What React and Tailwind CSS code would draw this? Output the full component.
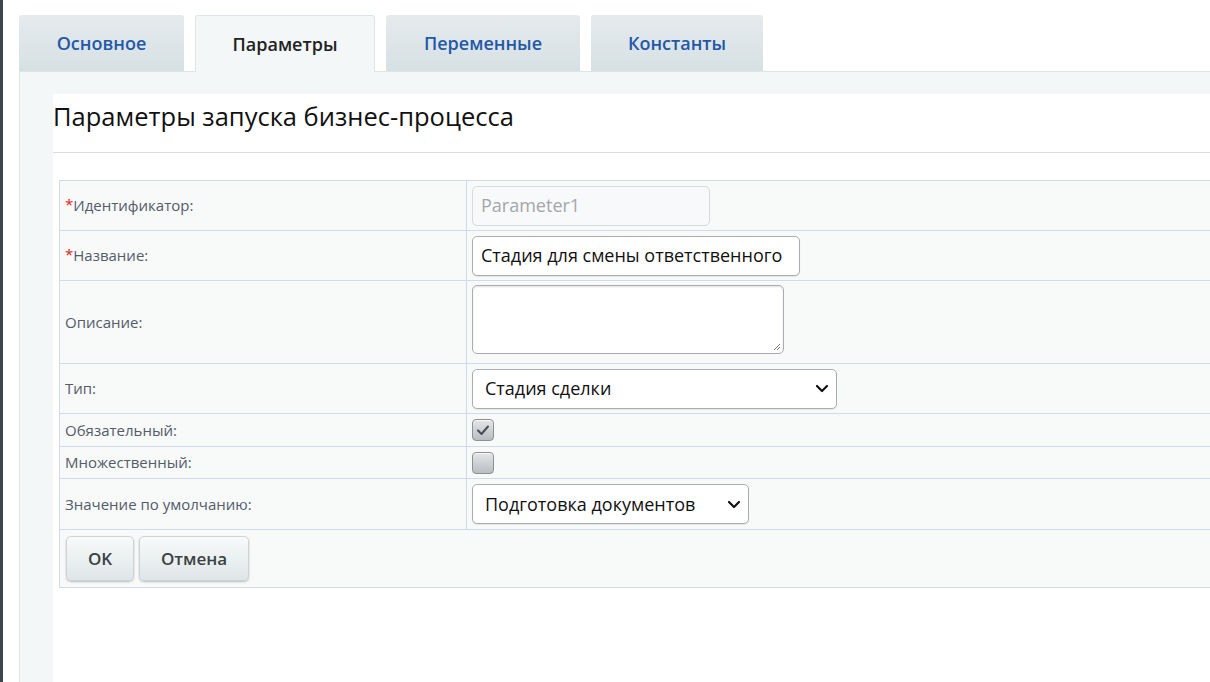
import React from "react";

const TABS = [
  { label: "Основное", w: "w-[165px]" },
  { label: "Параметры", w: "w-[180px]", active: true },
  { label: "Переменные", w: "w-[194px]" },
  { label: "Константы", w: "w-[172px]" },
];

function Chevron() {
  return (
    <svg width="14" height="9" viewBox="0 0 14 9" className="shrink-0">
      <path d="M2 2l5 5 5-5" fill="none" stroke="#111" strokeWidth="2.2" strokeLinecap="round" strokeLinejoin="round" />
    </svg>
  );
}

function Checkbox({ checked }) {
  return (
    <div className="w-[22px] h-[22px] rounded-[4px] border border-[#8d9196] bg-gradient-to-b from-[#e4e6e8] to-[#b9bdc1] flex items-center justify-center shadow-[inset_0_1px_0_rgba(255,255,255,0.7)]">
      {checked && (
        <svg width="14" height="12" viewBox="0 0 14 12">
          <path d="M2 6.5l3.5 3.5L12 2.5" fill="none" stroke="#4a4e52" strokeWidth="2" strokeLinecap="round" strokeLinejoin="round" />
        </svg>
      )}
    </div>
  );
}

function Row({ label, required, h, top, children }) {
  return (
    <div className={`flex border-t border-[#d3d9ea] ${h}`}>
      <div className="w-[407px] shrink-0 border-r border-[#d3d9ea] flex items-center pl-[5px] text-[15px] text-[#535c69]">
        {required && <span className="text-[#e02020] self-start mt-[16px] leading-none text-[15px]">*</span>}
        {label}
      </div>
      <div className={top ? "flex items-start pt-[4px] pl-[5px]" : "flex items-center pl-[5px]"}>{children}</div>
    </div>
  );
}

const fieldBase =
  "h-[40px] rounded-[5px] border border-[#a9adb2] bg-white flex items-center text-[18px] text-[#111] shadow-[0_1px_1px_rgba(0,0,0,0.08)]";

export default function App() {
  return (
    <div className="w-[1210px] h-[682px] overflow-hidden bg-white flex font-['Open_Sans',sans-serif]">
      <div className="w-[3px] shrink-0 bg-[#3b4650]" />
      <div className="flex-1 pl-[16px] pt-[15px] flex flex-col">
        <div className="flex gap-[11px] h-[57px] relative z-10">
          {TABS.map((t) =>
            t.active ? (
              <div
                key={t.label}
                className={`${t.w} h-[57px] rounded-t-[3px] border border-b-0 border-[#dce5e8] bg-[#f3f7f8] flex items-center justify-center text-[18px] font-semibold text-[#222]`}
              >
                {t.label}
              </div>
            ) : (
              <div
                key={t.label}
                className={`${t.w} h-[56px] rounded-t-[3px] bg-gradient-to-b from-[#e5ebed] to-[#d6e0e3] flex items-center justify-center text-[18px] font-semibold text-[#2358a8]`}
              >
                {t.label}
              </div>
            )
          )}
        </div>
        <div className="flex-1 -mt-px border-t border-l border-[#dce5e8] bg-[#f3f7f8] pl-[33px] pt-[22px] flex">
          <div className="flex-1 bg-white flex flex-col">
            <div className="h-[59px] border-b border-[#dcdcdc] flex items-start pt-[3px] text-[25.5px] text-[#111]">
              Параметры запуска бизнес-процесса
            </div>
            <div className="ml-[6px] mt-[27px] border border-r-0 border-[#d3d9ea] bg-[#f8f9f9] text-[#222]">
              <div className="flex h-[49px]">
                <div className="w-[407px] shrink-0 border-r border-[#d3d9ea] flex items-center pl-[5px] text-[15px] text-[#535c69]">
                  <span className="text-[#e02020] self-start mt-[16px] leading-none text-[15px]">*</span>
                  Идентификатор:
                </div>
                <div className="flex items-center pl-[5px]">
                  <div className="w-[238px] h-[40px] rounded-[5px] border border-[#d6d9dd] bg-[#f8f9fa] flex items-center px-[8px] text-[18px] text-[#a3a7ab]">
                    Parameter1
                  </div>
                </div>
              </div>
              <Row label="Название:" required h="h-[50px]">
                <div className={`${fieldBase} w-[328px] px-[8px] whitespace-nowrap`}>Стадия для смены ответственного</div>
              </Row>
              <Row label="Описание:" h="h-[83px]" top>
                <div className="relative w-[312px] h-[69px] rounded-[5px] border border-[#a9adb2] bg-white shadow-[inset_0_1px_2px_rgba(0,0,0,0.12)]">
                  <svg width="10" height="10" viewBox="0 0 10 10" className="absolute right-[2px] bottom-[2px]">
                    <path d="M9 3L3 9M9 6L6 9" stroke="#777" strokeWidth="1" />
                  </svg>
                </div>
              </Row>
              <Row label="Тип:" h="h-[50px]">
                <div className={`${fieldBase} w-[365px] justify-between pl-[12px] pr-[7px]`}>
                  Стадия сделки
                  <Chevron />
                </div>
              </Row>
              <Row label="Обязательный:" h="h-[33px]">
                <Checkbox checked />
              </Row>
              <Row label="Множественный:" h="h-[32px]">
                <Checkbox />
              </Row>
              <Row label="Значение по умолчанию:" h="h-[51px]">
                <div className={`${fieldBase} w-[277px] justify-between pl-[12px] pr-[7px]`}>
                  Подготовка документов
                  <Chevron />
                </div>
              </Row>
              <div className="h-[58px] border-t border-[#d3d9ea] flex items-center gap-[5px] pl-[6px]">
                <button className="w-[68px] h-[45px] rounded-[5px] border border-[#cdd3d6] bg-gradient-to-b from-[#f8fafa] to-[#dfe6e8] shadow-[0_1px_2px_rgba(0,0,0,0.25)] text-[17px] font-semibold text-[#3a4246]">
                  OK
                </button>
                <button className="w-[110px] h-[45px] rounded-[5px] border border-[#cdd3d6] bg-gradient-to-b from-[#f8fafa] to-[#dfe6e8] shadow-[0_1px_2px_rgba(0,0,0,0.25)] text-[17px] font-semibold text-[#3a4246]">
                  Отмена
                </button>
              </div>
            </div>
          </div>
        </div>
      </div>
    </div>
  );
}
